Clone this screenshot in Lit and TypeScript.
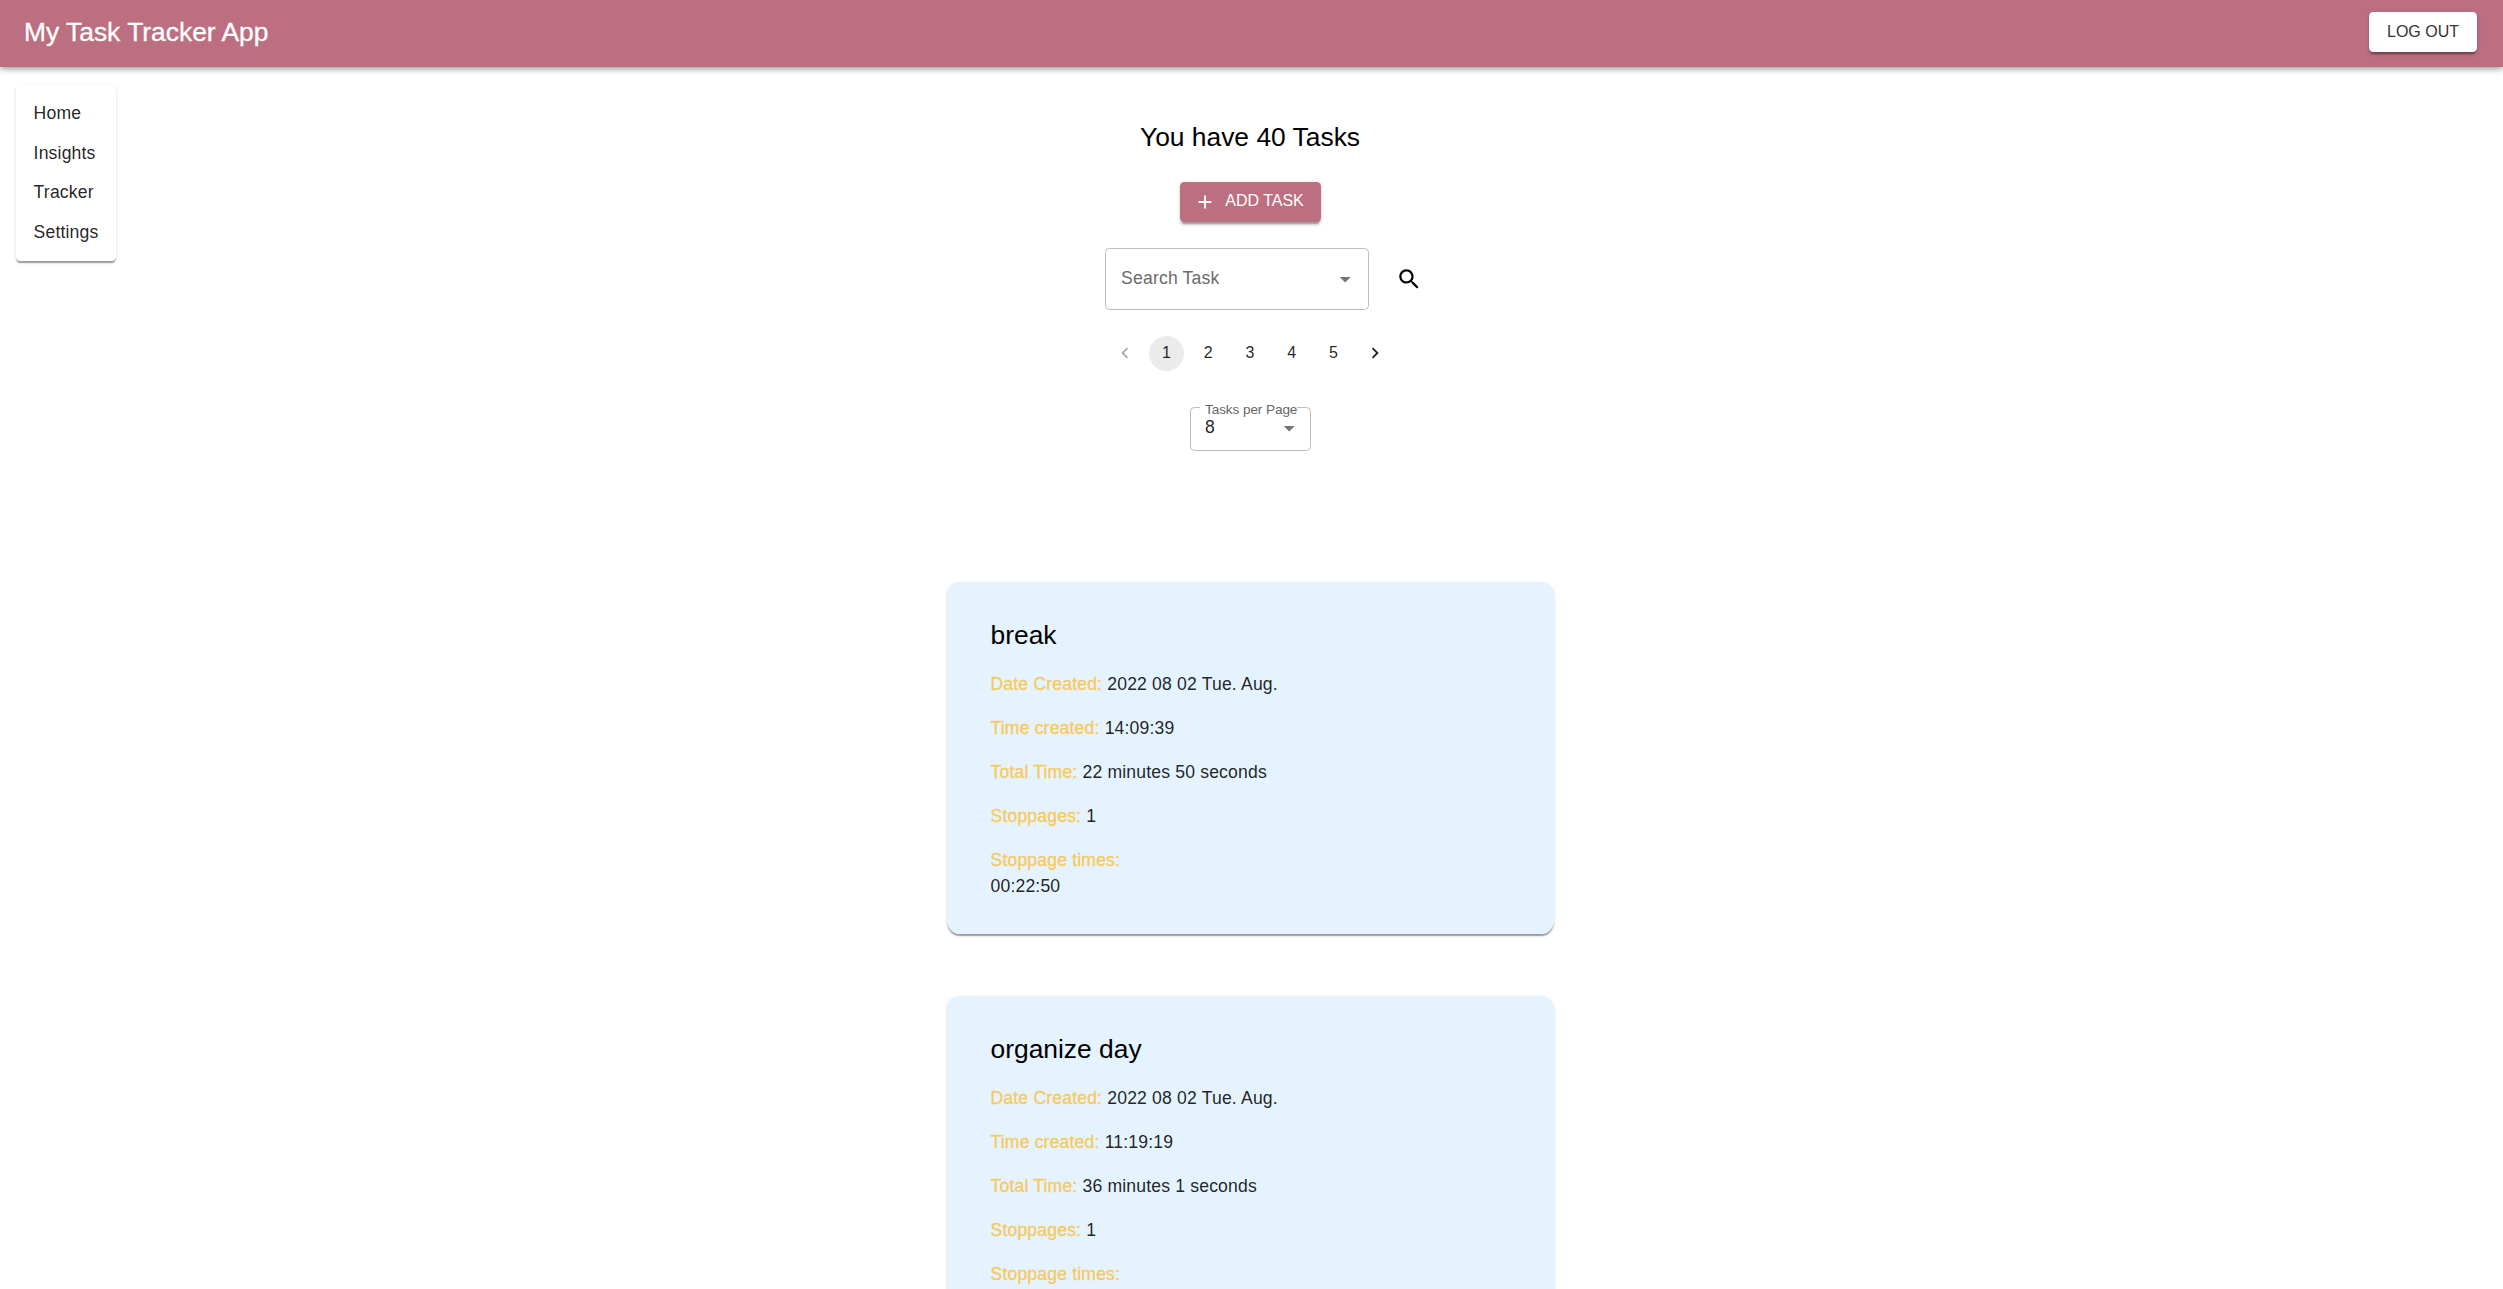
import { LitElement, html, css, svg } from "lit";
import { customElement, property } from "lit/decorators.js";

interface Task {
  title: string;
  date: string;
  time: string;
  total: string;
  stoppages: number;
  times: string[];
}

const TASKS: Task[] = [
  { title: "break", date: "2022 08 02 Tue. Aug.", time: "14:09:39", total: "22 minutes 50 seconds", stoppages: 1, times: ["00:22:50"] },
  { title: "organize day", date: "2022 08 02 Tue. Aug.", time: "11:19:19", total: "36 minutes 1 seconds", stoppages: 1, times: [] },
];

const icon = (cls: string, d: string) => html`<svg class="icon ${cls}" viewBox="0 0 24 24" aria-hidden="true">${svg`<path d=${d}></path>`}</svg>`;

const PLUS = "M19 13h-6v6h-2v-6H5v-2h6V5h2v6h6v2z";
const CARET = "M7 10l5 5 5-5z";
const SEARCH =
  "M15.5 14h-.79l-.28-.27C15.41 12.59 16 11.11 16 9.5 16 5.91 13.09 3 9.5 3S3 5.91 3 9.5 5.91 16 9.5 16c1.61 0 3.09-.59 4.23-1.57l.27.28v.79l5 4.99L20.49 19l-4.99-5zm-6 0C7.01 14 5 11.99 5 9.5S7.01 5 9.5 5 14 7.01 14 9.5 11.99 14 9.5 14z";
const PREV = "M15.41 7.41L14 6l-6 6 6 6 1.41-1.41L10.83 12z";
const NEXT = "M10 6L8.59 7.41 13.17 12l-4.58 4.59L10 18l6-6z";

@customElement("task-card")
export class TaskCard extends LitElement {
  @property({ attribute: false }) task!: Task;

  static styles = css`
    :host {
      display: block;
      box-sizing: border-box;
      width: 607px;
      height: 352px;
      padding: 36px 44px;
      border-radius: 13.2px;
      background: #e4f3fe;
      box-shadow: 0 2.2px 1.1px -1.1px rgba(0, 0, 0, 0.2), 0 1.1px 1.1px rgba(0, 0, 0, 0.14), 0 1.1px 3.3px rgba(0, 0, 0, 0.12);
      color: rgba(0, 0, 0, 0.87);
    }
    .title {
      font-size: 26.4px;
      line-height: 35.2px;
      margin-bottom: 17.6px;
      color: #000;
    }
    .row {
      font-size: 17.6px;
      line-height: 26.4px;
      letter-spacing: 0.165px;
      margin-bottom: 17.6px;
    }
    .label {
      color: #f9c95a;
      -webkit-text-stroke: 0.3px currentColor;
    }
  `;

  render() {
    const t = this.task;
    const row = (label: string, value: unknown) => html`<div class="row"><span class="label">${label}</span> ${value}</div>`;
    return html`
      <div class="title">${t.title}</div>
      ${row("Date Created:", t.date)} ${row("Time created:", t.time)} ${row("Total Time:", t.total)}
      ${row("Stoppages:", t.stoppages)} ${row("Stoppage times:", t.times.map((x) => html`<div>${x}</div>`))}
    `;
  }
}

@customElement("app-root")
export class AppRoot extends LitElement {
  static styles = css`
    :host {
      display: block;
      height: 1289px;
      overflow: hidden;
      background: #fff;
      color: rgba(0, 0, 0, 0.87);
      font-family: "Liberation Sans", Arial, sans-serif;
    }
    .icon {
      display: block;
      fill: currentColor;
      flex: none;
    }
    .bar {
      position: relative;
      display: flex;
      align-items: center;
      justify-content: space-between;
      box-sizing: border-box;
      height: 67px;
      padding: 0 26px 3px 24px;
      background: #bd6f82;
      color: #fff;
      box-shadow: 0 2.2px 4.4px -1.1px rgba(0, 0, 0, 0.2), 0 4.4px 5.5px rgba(0, 0, 0, 0.14), 0 1.1px 11px rgba(0, 0, 0, 0.12);
    }
    .brand {
      font-size: 26.4px;
      -webkit-text-stroke: 0.3px currentColor;
    }
    .btn {
      display: flex;
      align-items: center;
      justify-content: center;
      box-sizing: border-box;
      height: 40px;
      border: 0;
      border-radius: 4.4px;
      font: 16px/27px "Liberation Sans", Arial, sans-serif;
      text-transform: uppercase;
      box-shadow: 0 3.3px 1.1px -2.2px rgba(0, 0, 0, 0.2), 0 2.2px 2.2px rgba(0, 0, 0, 0.14), 0 1.1px 5.5px rgba(0, 0, 0, 0.12);
    }
    .logout {
      width: 108px;
      padding: 0 0 2px;
      background: #fff;
      color: #333;
    }
    .add {
      width: 141px;
      padding: 0 2px 0 0;
      gap: 9px;
      background: #bd6f82;
      color: #fff;
      margin-bottom: 26px;
    }
    .add span {
      padding-bottom: 3px;
    }
    .add .icon {
      width: 22px;
      height: 22px;
    }
    .body {
      display: grid;
      grid-template-columns: 1fr 620px 1fr;
      padding-right: 3px;
    }
    .menu {
      justify-self: start;
      align-self: start;
      box-sizing: border-box;
      width: 100px;
      height: 176.5px;
      margin: 17.5px 0 0 16px;
      padding: 9.6px 0 8px;
      border-radius: 4.4px;
      background: #fff;
      box-shadow: 0 2.2px 1.1px -1.1px rgba(0, 0, 0, 0.2), 0 1.1px 1.1px rgba(0, 0, 0, 0.14), 0 1.1px 3.3px rgba(0, 0, 0, 0.12);
    }
    .item {
      padding-left: 17.6px;
      font-size: 17.6px;
      line-height: 39.6px;
      letter-spacing: 0.165px;
    }
    .main {
      display: flex;
      flex-direction: column;
      align-items: center;
      padding-top: 51px;
    }
    .count {
      font-size: 26.4px;
      line-height: 38px;
      color: #000;
      margin-bottom: 26px;
    }
    .search {
      display: flex;
      align-items: center;
      gap: 26.4px;
      margin-right: -27px;
      color: #000;
    }
    .search > .icon {
      width: 26.4px;
      height: 26.4px;
    }
    .field {
      display: flex;
      align-items: center;
      justify-content: space-between;
      box-sizing: border-box;
      width: 264px;
      height: 62px;
      padding: 0 9.5px 0 15px;
      border: 1px solid #bdbdbd;
      border-radius: 4.4px;
      font-size: 17.6px;
      letter-spacing: 0.165px;
      color: #6b6b6b;
    }
    .field span,
    .value {
      padding-bottom: 2px;
    }
    .caret {
      width: 26.4px;
      height: 26.4px;
      color: #757575;
    }
    .pages {
      display: flex;
      gap: 6.6px;
      margin-top: 25.5px;
      font-size: 16px;
    }
    .page {
      display: flex;
      align-items: center;
      justify-content: center;
      width: 35.2px;
      height: 35.2px;
      border-radius: 50%;
    }
    .page .icon {
      width: 22px;
      height: 22px;
    }
    .current {
      background: #ebebeb;
    }
    .off {
      color: rgba(0, 0, 0, 0.34);
    }
    .select {
      position: relative;
      display: flex;
      align-items: center;
      justify-content: space-between;
      box-sizing: border-box;
      width: 121px;
      height: 44px;
      margin: 36px 0 131.5px;
      padding: 0 6.7px 0 14.5px;
      border: 1px solid #bdbdbd;
      border-radius: 4.4px;
      font-size: 17.6px;
    }
    .legend {
      position: absolute;
      left: 9px;
      top: -7px;
      padding: 0 0 0 5.5px;
      background: #fff;
      font-size: 13.6px;
      line-height: 17px;
      height: 17px;
      white-space: nowrap;
      letter-spacing: -0.1px;
      color: #666;
    }
    .cards {
      display: flex;
      flex-direction: column;
      gap: 62px;
    }
  `;

  render() {
    return html`
      <header class="bar">
        <div class="brand">My Task Tracker App</div>
        <button class="btn logout">Log out</button>
      </header>
      <div class="body">
        <nav class="menu">${["Home", "Insights", "Tracker", "Settings"].map((x) => html`<div class="item">${x}</div>`)}</nav>
        <main class="main">
          <div class="count">You have 40 Tasks</div>
          <button class="btn add">${icon("", PLUS)}<span>Add task</span></button>
          <div class="search">
            <div class="field"><span>Search Task</span>${icon("caret", CARET)}</div>
            ${icon("", SEARCH)}
          </div>
          <div class="pages">
            <div class="page off">${icon("", PREV)}</div>
            ${[1, 2, 3, 4, 5].map((n) => html`<div class="page ${n === 1 ? "current" : ""}">${n}</div>`)}
            <div class="page">${icon("", NEXT)}</div>
          </div>
          <div class="select">
            <span class="legend">Tasks per Page</span>
            <span class="value">8</span>${icon("caret", CARET)}
          </div>
          <div class="cards">${TASKS.map((t) => html`<task-card .task=${t}></task-card>`)}</div>
        </main>
      </div>
    `;
  }
}
